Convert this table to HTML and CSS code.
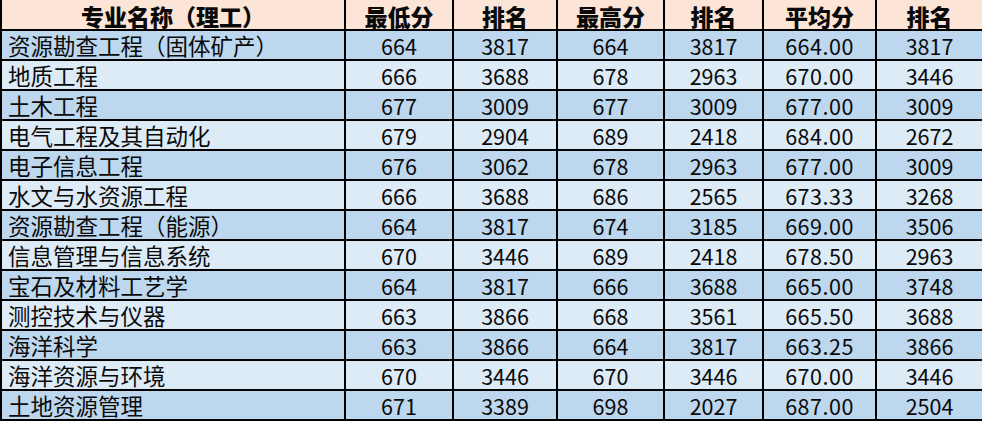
FILE: index.html
```html
<!DOCTYPE html>
<html lang="zh">
<head>
<meta charset="utf-8">
<link rel="stylesheet" href="styles.css">
</head>
<body>
<table class="scores">
  <colgroup>
    <col class="c-name"><col class="c1"><col class="c2"><col class="c3"><col class="c4"><col class="c5"><col class="c6">
  </colgroup>
  <thead>
    <tr><th>专业名称（理工）</th><th>最低分</th><th>排名</th><th>最高分</th><th>排名</th><th>平均分</th><th>排名</th></tr>
  </thead>
  <tbody>
    <tr><td>资源勘查工程（固体矿产）</td><td>664</td><td>3817</td><td>664</td><td>3817</td><td class="avg">664.00</td><td>3817</td></tr>
    <tr><td>地质工程</td><td>666</td><td>3688</td><td>678</td><td>2963</td><td class="avg">670.00</td><td>3446</td></tr>
    <tr><td>土木工程</td><td>677</td><td>3009</td><td>677</td><td>3009</td><td class="avg">677.00</td><td>3009</td></tr>
    <tr><td>电气工程及其自动化</td><td>679</td><td>2904</td><td>689</td><td>2418</td><td class="avg">684.00</td><td>2672</td></tr>
    <tr><td>电子信息工程</td><td>676</td><td>3062</td><td>678</td><td>2963</td><td class="avg">677.00</td><td>3009</td></tr>
    <tr><td>水文与水资源工程</td><td>666</td><td>3688</td><td>686</td><td>2565</td><td class="avg">673.33</td><td>3268</td></tr>
    <tr><td>资源勘查工程（能源）</td><td>664</td><td>3817</td><td>674</td><td>3185</td><td class="avg">669.00</td><td>3506</td></tr>
    <tr><td>信息管理与信息系统</td><td>670</td><td>3446</td><td>689</td><td>2418</td><td class="avg">678.50</td><td>2963</td></tr>
    <tr><td>宝石及材料工艺学</td><td>664</td><td>3817</td><td>666</td><td>3688</td><td class="avg">665.00</td><td>3748</td></tr>
    <tr><td>测控技术与仪器</td><td>663</td><td>3866</td><td>668</td><td>3561</td><td class="avg">665.50</td><td>3688</td></tr>
    <tr><td>海洋科学</td><td>663</td><td>3866</td><td>664</td><td>3817</td><td class="avg">663.25</td><td>3866</td></tr>
    <tr><td>海洋资源与环境</td><td>670</td><td>3446</td><td>670</td><td>3446</td><td class="avg">670.00</td><td>3446</td></tr>
    <tr><td>土地资源管理</td><td>671</td><td>3389</td><td>698</td><td>2027</td><td class="avg">687.00</td><td>2504</td></tr>
  </tbody>
</table>
</body>
</html>
```

FILE: styles.css
```css
html, body {
  margin: 0;
  padding: 0;
  background: #ffffff;
}
body {
  width: 982px;
  height: 422px;
  overflow: hidden;
  font-family: "Noto Sans CJK SC", "Noto Sans", sans-serif;
  color: #0a0a0a;
}
.scores {
  border-collapse: collapse;
  table-layout: fixed;
  width: 982px;
}
.c-name { width: 344px; }
.c1 { width: 108px; }
.c2 { width: 104px; }
.c3 { width: 107px; }
.c4 { width: 99px; }
.c5 { width: 113px; }
.c6 { width: 107px; }
.scores th,
.scores td {
  border: 2px solid #000000;
  height: 27px;
  padding: 1px 0 0;
  text-align: center;
  vertical-align: middle;
  font-size: 21.5px;
  line-height: 27px;
  white-space: nowrap;
}
.scores th {
  border-top: 0;
  background: #fce4d6;
  font-weight: 900;
  font-size: 23px;
  height: 25px;
  padding-top: 4px;
  line-height: 25px;
}
.scores td:first-child {
  text-align: left;
  padding-left: 6px;
  font-size: 22.5px;
}
.scores td.avg {
  letter-spacing: 0.5px;
}
.scores tbody tr:nth-child(odd) td {
  background: #bdd7ee;
}
.scores tbody tr:nth-child(even) td {
  background: #ddebf7;
}
```
